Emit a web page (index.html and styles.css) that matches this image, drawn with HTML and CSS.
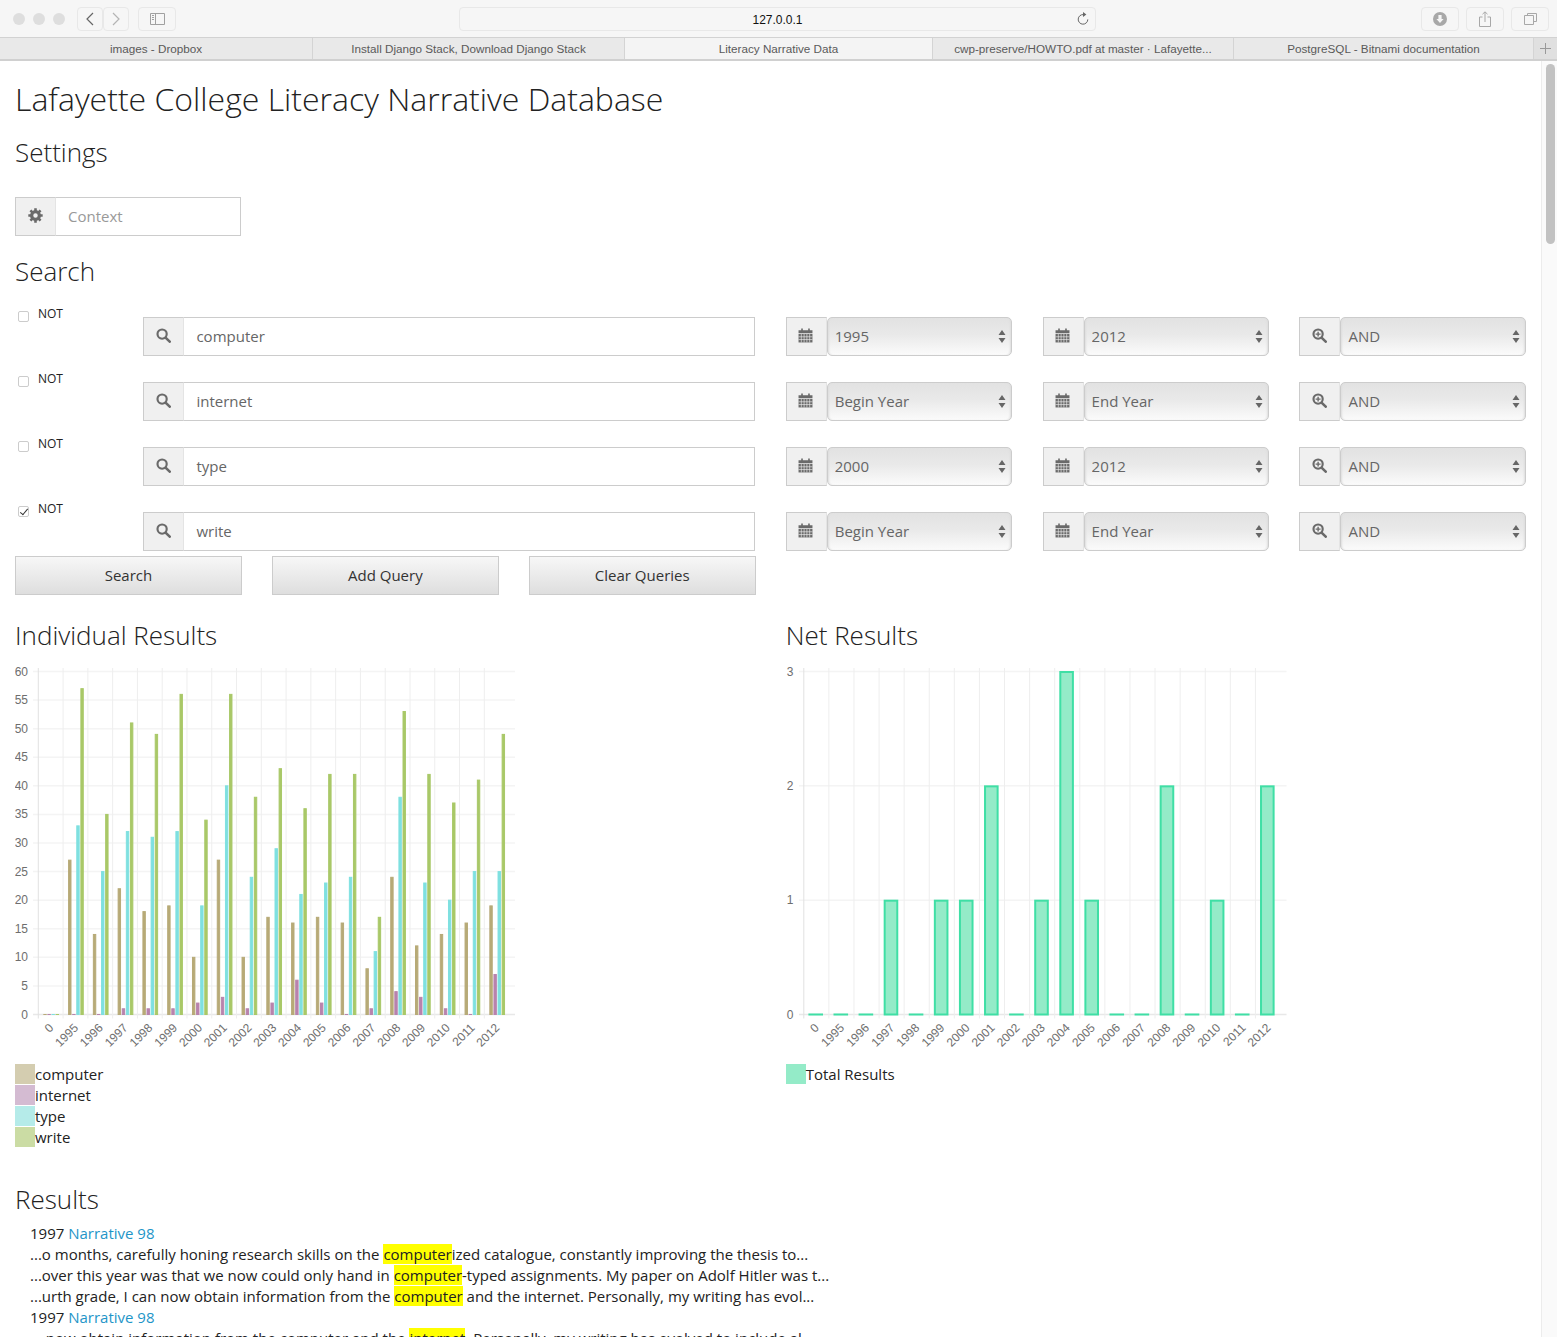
FILE: index.html
```html
<!DOCTYPE html>
<html lang="en">
<head>
  <meta charset="UTF-8" />
  <title>Literacy Narrative Data</title>
  <link rel="stylesheet" href="styles.css">
</head>
<body>
  <svg class="sprite" width="0" height="0">
    <symbol id="i-search" viewBox="0 0 14 14">
      <circle cx="5.7" cy="5.7" r="4.3" fill="none" stroke="currentColor" stroke-width="2"/>
      <path d="M8.9 8.9 L12.8 12.8" stroke="currentColor" stroke-width="2.4" stroke-linecap="round"/>
    </symbol>
    <symbol id="i-zoom" viewBox="0 0 14 14">
      <circle cx="5.7" cy="5.7" r="4.3" fill="none" stroke="currentColor" stroke-width="2"/>
      <path d="M8.9 8.9 L12.8 12.8" stroke="currentColor" stroke-width="2.4" stroke-linecap="round"/>
      <path d="M3.4 5.7 H8 M5.7 3.4 V8" stroke="currentColor" stroke-width="1.3"/>
    </symbol>
    <symbol id="i-calendar" viewBox="0 0 14 14">
      <path d="M3 .5 H4.5 V2 H9.5 V.5 H11 V2 H13.5 V5 H.5 V2 H3 Z" fill="currentColor"/>
      <path d="M.5 5.6 H13.5 V13.5 H.5 Z" fill="currentColor"/>
      <path d="M.5 8.2 H13.5 M.5 10.8 H13.5 M3.1 5.6 V13.5 M5.7 5.6 V13.5 M8.3 5.6 V13.5 M10.9 5.6 V13.5" stroke="#f0f0f0" stroke-width=".6"/>
    </symbol>
    <symbol id="i-cog" viewBox="0 0 14 14">
      <circle cx="7" cy="7" r="3.6" fill="none" stroke="currentColor" stroke-width="3"/>
      <path d="M5.8 .3 H8.2 V3 H5.8 Z M5.8 11 H8.2 V13.7 H5.8 Z M.3 5.8 H3 V8.2 H.3 Z M11 5.8 H13.7 V8.2 H11 Z" fill="currentColor"/>
      <path d="M5.8 .3 H8.2 V3 H5.8 Z M5.8 11 H8.2 V13.7 H5.8 Z M.3 5.8 H3 V8.2 H.3 Z M11 5.8 H13.7 V8.2 H11 Z" fill="currentColor" transform="rotate(45 7 7)"/>
    </symbol>
    <symbol id="i-arrows" viewBox="0 0 8 13">
      <path d="M4 0 L7.5 5 H.5 Z M4 13 L.5 8 H7.5 Z" fill="currentColor"/>
    </symbol>
  </svg>

  <header class="toolbar">
    <div class="lights"><span></span><span></span><span></span></div>
    <div class="nav-group">
      <button class="tool tool-back">
        <svg width="8" height="14" viewBox="0 0 8 14"><path d="M7 1 L1 7 L7 13" fill="none" stroke="#666" stroke-width="1.2"/></svg>
      </button>
      <button class="tool tool-forward">
        <svg width="8" height="14" viewBox="0 0 8 14"><path d="M1 1 L7 7 L1 13" fill="none" stroke="#b4b4b4" stroke-width="1.2"/></svg>
      </button>
    </div>
    <button class="tool tool-side">
      <svg width="15" height="12" viewBox="0 0 15 12"><path d="M.5 .5 H14.5 V11.5 H.5 Z M5.5 .5 V11.5" fill="none" stroke="#a0a0a0"/><path d="M2 2.5 H4 M2 4.5 H4 M2 6.5 H4" stroke="#a0a0a0"/></svg>
    </button>
    <div class="address">
      <span>127.0.0.1</span>
      <svg class="reload" width="12" height="14" viewBox="0 0 12 14"><path d="M6.5 2.6 A4.8 4.8 0 1 0 10.8 7.4" fill="none" stroke="#666" stroke-width="1"/><path d="M6 0 L9.4 2.6 L6 5 Z" fill="#666"/></svg>
    </div>
    <div class="tool-right">
      <button class="tool tool-wide">
        <svg width="14" height="14" viewBox="0 0 14 14"><circle cx="7" cy="7" r="7" fill="#a8a8a8"/><path d="M5.4 3 H8.6 V7 H10.6 L7 11 L3.4 7 H5.4 Z" fill="#f6f6f6"/></svg>
      </button>
      <button class="tool tool-wide">
        <svg width="12" height="16" viewBox="0 0 12 16"><path d="M3.5 6 H.5 V15.5 H11.5 V6 H8.5 M6 11 V1 M3.5 3.2 L6 .8 L8.5 3.2" fill="none" stroke="#a8a8a8"/></svg>
      </button>
      <button class="tool tool-wide">
        <svg width="13" height="12" viewBox="0 0 13 12"><path d="M3.5 2.5 V.5 H12.5 V8.5 H9.5 M.5 2.5 H9.5 V11.5 H.5 Z" fill="none" stroke="#a8a8a8"/></svg>
      </button>
    </div>
  </header>

  <nav class="tabs">
    <div class="tab">images - Dropbox</div>
    <div class="tab">Install Django Stack, Download Django Stack</div>
    <div class="tab tab-active">Literacy Narrative Data</div>
    <div class="tab">cwp-preserve/HOWTO.pdf at master · Lafayette...</div>
    <div class="tab">PostgreSQL - Bitnami documentation</div>
    <div class="tab tab-new">
      <svg width="11" height="11" viewBox="0 0 11 11"><path d="M5.5 0 V11 M0 5.5 H11" stroke="#999"/></svg>
    </div>
  </nav>

  <div class="viewport">
    <main class="page">
      <h1 class="title">Lafayette College Literacy Narrative Database</h1>
      <h2 class="heading heading-settings">Settings</h2>

      <div class="row row-context">
        <div class="cell span-2">
          <div class="field">
            <span class="prefix"><svg class="icon"><use href="#i-cog"/></svg></span>
            <input class="text-input" type="text" placeholder="Context">
          </div>
        </div>
      </div>

      <h2 class="heading heading-search">Search</h2>

      <div class="queries">
        <div class="row query">
          <label class="not-cell span-1"><input type="checkbox"> NOT</label>
          <div class="cell span-5 query-cell">
            <div class="field">
              <span class="prefix"><svg class="icon"><use href="#i-search"/></svg></span>
              <input class="text-input" type="text" value="computer">
            </div>
          </div>
          <div class="cell span-2 query-cell">
            <div class="field">
              <span class="prefix"><svg class="icon icon-cal"><use href="#i-calendar"/></svg></span>
              <span class="select"><select><option>1995</option></select><svg class="arrows"><use href="#i-arrows"/></svg></span>
            </div>
          </div>
          <div class="cell span-2 query-cell">
            <div class="field">
              <span class="prefix"><svg class="icon icon-cal"><use href="#i-calendar"/></svg></span>
              <span class="select"><select><option>2012</option></select><svg class="arrows"><use href="#i-arrows"/></svg></span>
            </div>
          </div>
          <div class="cell span-2 query-cell">
            <div class="field">
              <span class="prefix"><svg class="icon"><use href="#i-zoom"/></svg></span>
              <span class="select"><select><option>AND</option></select><svg class="arrows"><use href="#i-arrows"/></svg></span>
            </div>
          </div>
        </div>

        <div class="row query">
          <label class="not-cell span-1"><input type="checkbox"> NOT</label>
          <div class="cell span-5 query-cell">
            <div class="field">
              <span class="prefix"><svg class="icon"><use href="#i-search"/></svg></span>
              <input class="text-input" type="text" value="internet">
            </div>
          </div>
          <div class="cell span-2 query-cell">
            <div class="field">
              <span class="prefix"><svg class="icon icon-cal"><use href="#i-calendar"/></svg></span>
              <span class="select"><select><option>Begin Year</option></select><svg class="arrows"><use href="#i-arrows"/></svg></span>
            </div>
          </div>
          <div class="cell span-2 query-cell">
            <div class="field">
              <span class="prefix"><svg class="icon icon-cal"><use href="#i-calendar"/></svg></span>
              <span class="select"><select><option>End Year</option></select><svg class="arrows"><use href="#i-arrows"/></svg></span>
            </div>
          </div>
          <div class="cell span-2 query-cell">
            <div class="field">
              <span class="prefix"><svg class="icon"><use href="#i-zoom"/></svg></span>
              <span class="select"><select><option>AND</option></select><svg class="arrows"><use href="#i-arrows"/></svg></span>
            </div>
          </div>
        </div>

        <div class="row query">
          <label class="not-cell span-1"><input type="checkbox"> NOT</label>
          <div class="cell span-5 query-cell">
            <div class="field">
              <span class="prefix"><svg class="icon"><use href="#i-search"/></svg></span>
              <input class="text-input" type="text" value="type">
            </div>
          </div>
          <div class="cell span-2 query-cell">
            <div class="field">
              <span class="prefix"><svg class="icon icon-cal"><use href="#i-calendar"/></svg></span>
              <span class="select"><select><option>2000</option></select><svg class="arrows"><use href="#i-arrows"/></svg></span>
            </div>
          </div>
          <div class="cell span-2 query-cell">
            <div class="field">
              <span class="prefix"><svg class="icon icon-cal"><use href="#i-calendar"/></svg></span>
              <span class="select"><select><option>2012</option></select><svg class="arrows"><use href="#i-arrows"/></svg></span>
            </div>
          </div>
          <div class="cell span-2 query-cell">
            <div class="field">
              <span class="prefix"><svg class="icon"><use href="#i-zoom"/></svg></span>
              <span class="select"><select><option>AND</option></select><svg class="arrows"><use href="#i-arrows"/></svg></span>
            </div>
          </div>
        </div>

        <div class="row query">
          <label class="not-cell span-1"><input type="checkbox" checked> NOT</label>
          <div class="cell span-5 query-cell">
            <div class="field">
              <span class="prefix"><svg class="icon"><use href="#i-search"/></svg></span>
              <input class="text-input" type="text" value="write">
            </div>
          </div>
          <div class="cell span-2 query-cell">
            <div class="field">
              <span class="prefix"><svg class="icon icon-cal"><use href="#i-calendar"/></svg></span>
              <span class="select"><select><option>Begin Year</option></select><svg class="arrows"><use href="#i-arrows"/></svg></span>
            </div>
          </div>
          <div class="cell span-2 query-cell">
            <div class="field">
              <span class="prefix"><svg class="icon icon-cal"><use href="#i-calendar"/></svg></span>
              <span class="select"><select><option>End Year</option></select><svg class="arrows"><use href="#i-arrows"/></svg></span>
            </div>
          </div>
          <div class="cell span-2 query-cell">
            <div class="field">
              <span class="prefix"><svg class="icon"><use href="#i-zoom"/></svg></span>
              <span class="select"><select><option>AND</option></select><svg class="arrows"><use href="#i-arrows"/></svg></span>
            </div>
          </div>
        </div>
      </div>

      <div class="row row-buttons">
        <div class="cell span-2"><button class="button">Search</button></div>
        <div class="cell span-2"><button class="button">Add Query</button></div>
        <div class="cell span-2"><button class="button">Clear Queries</button></div>
      </div>

      <div class="row row-charts">
        <section class="cell span-6">
          <h2 class="heading">Individual Results</h2>
          <svg id="individualChart" class="chart" width="520" height="400"></svg>
          <ul id="individualLegend" class="legend"></ul>
        </section>
        <section class="cell span-6">
          <h2 class="heading">Net Results</h2>
          <svg id="netChart" class="chart" width="520" height="400"></svg>
          <ul id="netLegend" class="legend"></ul>
        </section>
      </div>

      <h2 class="heading heading-results">Results</h2>
      <div class="results">
        <div>1997 <a href="#">Narrative 98</a></div>
        <div>...o months, carefully honing research skills on the <mark>computer</mark>ized catalogue, constantly improving the thesis to...</div>
        <div>...over this year was that we now could only hand in <mark>computer</mark>-typed assignments. My paper on Adolf Hitler was t...</div>
        <div>...urth grade, I can now obtain information from the <mark>computer</mark> and the internet. Personally, my writing has evol...</div>
        <div>1997 <a href="#">Narrative 98</a></div>
        <div>... now obtain information from the computer and the <mark>internet</mark>. Personally, my writing has evolved to include al...</div>
      </div>
    </main>
    <div class="scrollbar"><div class="thumb"></div></div>
  </div>

  <script src="chart.js"></script>
</body>
</html>
```

FILE: styles.css
```css
* {
  box-sizing: border-box;
}
html, body {
  height: 100%;
  margin: 0;
  overflow: hidden;
}
body {
  display: flex;
  flex-direction: column;
  background: #fff;
  color: #222;
  font-family: "Open Sans", sans-serif;
  font-size: 15px;
}
.sprite {
  position: absolute;
}

/* browser chrome */
.toolbar {
  display: flex;
  align-items: center;
  height: 38px;
  flex: none;
  padding: 0 8px 0 13px;
  background: #f6f6f6;
  border-bottom: 1px solid #d2d2d2;
}
.lights {
  display: flex;
  gap: 8px;
}
.lights span {
  width: 12px;
  height: 12px;
  border-radius: 50%;
  background: #dedede;
}
.nav-group {
  display: flex;
  margin-left: 12px;
}
.tool {
  display: flex;
  align-items: center;
  justify-content: center;
  height: 24px;
  padding: 0;
  background: #f6f6f6;
  border: 1px solid #e8e8e8;
  border-radius: 4px;
}
.tool-back, .tool-forward {
  width: 26px;
}
.tool-side {
  width: 38px;
  margin-left: 9px;
}
.address {
  position: relative;
  width: 637px;
  height: 24px;
  margin-left: 283px;
  background: #f6f6f6;
  border: 1px solid #e8e8e8;
  border-radius: 4px;
  color: #111;
  font-family: "Liberation Sans", sans-serif;
  font-size: 12px;
  line-height: 24px;
  text-align: center;
}
.reload {
  position: absolute;
  right: 6px;
  top: 4px;
}
.tool-right {
  display: flex;
  gap: 7px;
  margin-left: auto;
}
.tool-wide {
  width: 38px;
}
.tabs {
  display: grid;
  grid-template-columns: 313px 312px 308px 301px 300px 23px;
  height: 23px;
  flex: none;
  background: #e9e9e9;
  border-bottom: 2px solid #d0d0d0;
  color: #5a5a5a;
  font-family: "Liberation Sans", sans-serif;
  font-size: 11.7px;
  line-height: 22px;
  text-align: center;
}
.tab {
  border-right: 1px solid #d4d4d4;
  white-space: nowrap;
  overflow: hidden;
}
.tab-active {
  background: #f4f4f4;
}
.tab-new {
  display: flex;
  align-items: center;
  justify-content: center;
  border-right: 0;
  background: #e0e0e0;
}

.viewport {
  display: flex;
  flex: 1;
  min-height: 0;
}
.page {
  width: 1541.4px;
  flex: none;
  padding-top: 16px;
}
.scrollbar {
  flex: 1;
  padding: 3px 2px 0 4px;
  border-left: 1px solid #ececec;
  background: #fafafa;
}
.thumb {
  height: 180px;
  border-radius: 5px;
  background: #c2c2c2;
}

/* headings */
.title {
  margin: 0 15px;
  color: #222;
  font-size: 32px;
  font-weight: 300;
  line-height: 44px;
}
.heading {
  margin: 0;
  color: #222;
  font-size: 26px;
  font-weight: 300;
  line-height: 34px;
}
.heading-settings {
  margin: 14px 15px 28px;
}
.heading-search {
  margin: 18px 15px 16px;
}
.heading-results {
  margin: 34px 15px 7px;
}

/* grid */
.row {
  display: grid;
  grid-template-columns: repeat(12, 1fr);
}
.cell {
  padding: 0 15px;
  min-width: 0;
}
.span-1 { grid-column: span 1; }
.span-2 { grid-column: span 2; }
.span-5 { grid-column: span 5; }
.span-6 { grid-column: span 6; }
.row-context .cell {
  padding-right: 16px;
}

/* form parts */
.field {
  display: flex;
  height: 39px;
}
.prefix {
  display: flex;
  align-items: center;
  justify-content: center;
  width: 41px;
  flex: none;
  background: #f0f0f0;
  border: 1px solid #ccc;
  border-right-color: #e4e4e4;
  color: #6a6a6a;
}
.icon {
  width: 15px;
  height: 15px;
  margin-top: -2px;
}
.icon-cal {
  margin-left: -2px;
}
.text-input {
  flex: 1;
  min-width: 0;
  padding: 0 12px 2px;
  border: 1px solid #ccc;
  border-left: 0;
  color: #666;
  font-family: inherit;
  font-size: 15px;
}
.text-input::placeholder {
  color: #999;
}
.queries {
  display: flex;
  flex-direction: column;
  gap: 13px;
}
.query-cell {
  padding-top: 13px;
  padding-right: 15.7px;
}
.not-cell {
  display: flex;
  align-items: flex-start;
  gap: 9px;
  padding: 1px 0 0 18px;
  color: #222;
  font-size: 12px;
  line-height: 18px;
}
.not-cell input {
  appearance: none;
  position: relative;
  width: 11px;
  height: 11px;
  margin: 6px 0 0;
  background: #fff;
  border: 1px solid #ccc;
  border-radius: 2px;
}
.not-cell input:checked::after {
  content: "";
  position: absolute;
  left: 3px;
  top: 0;
  width: 3px;
  height: 7px;
  border: solid #333;
  border-width: 0 1px 1px 0;
  transform: rotate(40deg);
}
.select {
  position: relative;
  flex: 1;
  min-width: 0;
}
.select select {
  appearance: none;
  width: 100%;
  height: 100%;
  padding: 0 24px 2px 7px;
  background: linear-gradient(#e2e2e2, #e9e9e9 45%, #fbfbfb);
  border: 1px solid #ccc;
  border-radius: 5px;
  box-shadow: inset 2px 0 2px -1px #ddd, inset -2px 0 2px -1px #ddd;
  color: #666;
  font-family: inherit;
  font-size: 15px;
}
.arrows {
  position: absolute;
  right: 6px;
  top: 13px;
  width: 8px;
  height: 13px;
  color: #666;
}
.row-buttons {
  margin-top: 5px;
}
.button {
  width: 100%;
  height: 39px;
  padding: 0 0 2px;
  background: linear-gradient(#f7f7f7, #dedede);
  border: 1px solid #ccc;
  color: #333;
  font-family: inherit;
  font-size: 15px;
}

/* charts */
.row-charts {
  margin-top: 23px;
}
.chart {
  display: block;
  margin-top: 8px;
}
.chart text {
  fill: #6e6e6e;
  font-family: "Liberation Sans", sans-serif;
  font-size: 12px;
}
.legend {
  margin: 4px 0 0;
  padding: 0;
  list-style: none;
}
.legend li {
  display: flex;
  height: 21px;
  line-height: 21px;
}
.swatch {
  width: 20px;
  height: 20px;
}

/* results */
.results {
  margin: 0 30px;
  line-height: 21px;
  white-space: nowrap;
}
.results a {
  color: #1e95c8;
  text-decoration: none;
}
.results mark {
  background: #ff0;
  color: inherit;
}
```

FILE: chart.js
```js
const years = ['0', '1995', '1996', '1997', '1998', '1999', '2000', '2001', '2002', '2003',
  '2004', '2005', '2006', '2007', '2008', '2009', '2010', '2011', '2012'];

const individual = {
  svg: 'individualChart',
  legend: 'individualLegend',
  max: 60,
  tick: 5,
  axisX: 23.3,
  step: 24.78,
  left: 18,
  right: 500,
  labelX: 13,
  barOffset: 5,
  barWidth: 2.4,
  barStep: 4.1,
  strokeWidth: 1,
  datasets: [
    { label: 'computer', stroke: '#b7aa77', fill: '#b7aa77', swatch: '#d4cdb0',
      data: [0, 27, 14, 22, 18, 19, 10, 27, 10, 17, 16, 17, 16, 8, 24, 12, 14, 16, 19] },
    { label: 'internet', stroke: '#b883ad', fill: '#b883ad', swatch: '#d4bbd2',
      data: [0, 0, 0, 1, 1, 1, 2, 3, 1, 2, 6, 2, 0, 1, 4, 3, 1, 0, 7] },
    { label: 'type', stroke: '#7fe0e0', fill: '#7fe0e0', swatch: '#b5ebe9',
      data: [0, 33, 25, 32, 31, 32, 19, 40, 24, 29, 21, 23, 24, 11, 38, 23, 20, 25, 25] },
    { label: 'write', stroke: '#a9c868', fill: '#a9c868', swatch: '#cbdca4',
      data: [0, 57, 35, 51, 49, 56, 34, 56, 38, 43, 36, 42, 42, 17, 53, 42, 37, 41, 49] }
  ]
};

const net = {
  svg: 'netChart',
  legend: 'netLegend',
  max: 3,
  tick: 1,
  axisX: 17.8,
  step: 25.09,
  left: 13,
  right: 500.5,
  labelX: 7.5,
  barOffset: 4.6,
  barWidth: 12.6,
  barStep: 0,
  strokeWidth: 2,
  datasets: [
    { label: 'Total Results', stroke: '#3fdfa5', fill: '#94ebc8', swatch: '#94ebc8',
      data: [0, 0, 0, 1, 0, 1, 1, 2, 0, 1, 3, 1, 0, 0, 2, 0, 1, 0, 2] }
  ]
};

const TOP = 11.5;
const BASE = 354.5;

function add(svg, name, attrs, text) {
  const el = document.createElementNS('http://www.w3.org/2000/svg', name);
  Object.keys(attrs).forEach(key => el.setAttribute(key, attrs[key]));
  if (text !== undefined) el.textContent = text;
  svg.appendChild(el);
}

function drawChart(c) {
  const svg = document.getElementById(c.svg);
  const yFor = value => BASE - (BASE - TOP) * value / c.max;

  // horizontal grid and y labels
  for (let v = 0; v <= c.max; v += c.tick) {
    const y = yFor(v);
    add(svg, 'line', { x1: c.left, x2: c.right, y1: y, y2: y, stroke: v === 0 ? '#e8e8e8' : '#f4f4f4', 'stroke-width': 1.5 });
    add(svg, 'text', { x: c.labelX, y: y + 4, 'text-anchor': 'end' }, v);
  }

  // vertical grid and x labels
  years.forEach((year, i) => {
    const x = c.axisX + c.step * i;
    add(svg, 'line', { x1: x, x2: x, y1: 8, y2: BASE + 4, stroke: i === 0 ? '#e2e2e2' : '#eeeeee' });
    const cx = x + c.step / 2 + 3.5;
    add(svg, 'text', { 'text-anchor': 'end', transform: `translate(${cx} ${BASE + 14}) rotate(-45)` }, year);
  });

  // bars, a zero value still shows its stroke as a dash on the axis
  c.datasets.forEach((set, d) => {
    set.data.forEach((value, i) => {
      const half = c.strokeWidth / 2;
      const x = c.axisX + c.step * i + c.barOffset + d * c.barStep + half;
      const y = Math.min(yFor(value) + half - 0.5, BASE - 0.01);
      add(svg, 'rect', { x: x, y: y, width: c.barWidth, height: BASE - y, fill: set.fill, stroke: set.stroke, 'stroke-width': c.strokeWidth });
    });
  });

  // legend
  const legend = document.getElementById(c.legend);
  c.datasets.forEach(set => {
    const li = document.createElement('li');
    const swatch = document.createElement('span');
    swatch.className = 'swatch';
    swatch.style.background = set.swatch;
    li.appendChild(swatch);
    li.appendChild(document.createTextNode(set.label));
    legend.appendChild(li);
  });
}

drawChart(individual);
drawChart(net);
```
